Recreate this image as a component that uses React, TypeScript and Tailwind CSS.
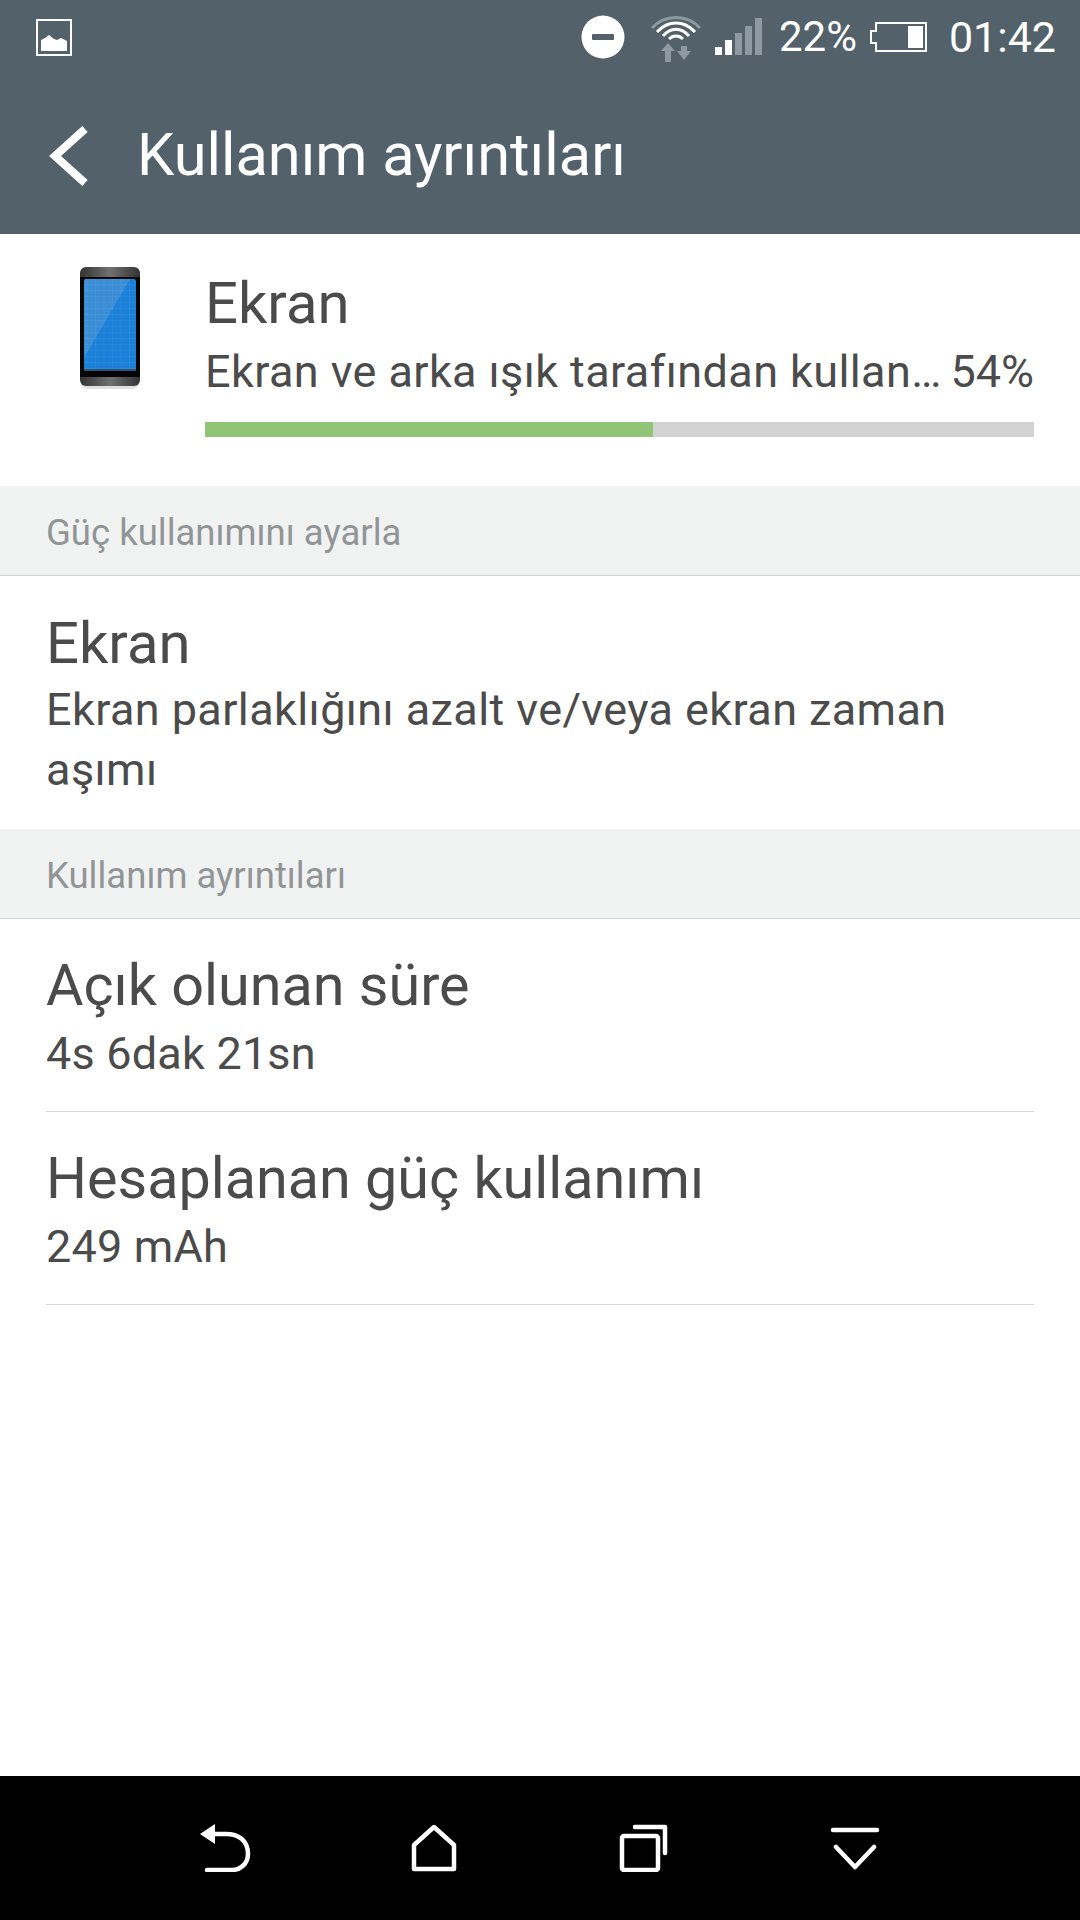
import React from 'react';

const StatusBar = () => (
  <div className="h-[74px] flex items-center pl-[36px] pr-[24px] text-white">
    <svg width="36" height="37" viewBox="0 0 36 37" className="shrink-0">
      <rect x="1" y="1" width="34" height="35" fill="none" stroke="#fff" strokeWidth="2" />
      <path d="M5 32V21l4-2 4-3 5 4 3 1 4-2 6 3v10z" fill="#fff" />
    </svg>
    <div className="ml-auto flex items-center">
      <svg width="44" height="44" viewBox="0 0 44 44" className="mr-[25px]">
        <circle cx="22" cy="22" r="21.500" fill="#fff" />
        <rect x="11" y="19" width="22" height="6" rx="1" fill="#52616a" />
      </svg>
      <svg width="52" height="50" viewBox="0 0 52 50" className="mr-[13px] mt-[2px]">
        <path d="M2 15C15 1 37 1 50 15" fill="none" stroke="#8e9aa1" strokeWidth="3" />
        <path d="M7 19C18 7 34 7 45 19" fill="none" stroke="#fff" strokeWidth="3" />
        <path d="M13 23C21 14 31 14 39 23" fill="none" stroke="#fff" strokeWidth="3" />
        <path d="M19 26C23 22 29 22 33 26" fill="none" stroke="#fff" strokeWidth="3" />
        <path d="M11 38l7-8 7 8h-4v11h-6V38zM27 38h4V33h6v5h4l-7 9z" fill="#8e9aa1" />
      </svg>
      <svg width="48" height="38" viewBox="0 0 48 38" className="mr-[16px]">
        <rect x="0" y="29" width="7" height="8" fill="#fff" />
        <rect x="10" y="22" width="7" height="15" fill="#fff" />
        <rect x="20" y="15" width="7" height="22" fill="#8e9aa1" />
        <rect x="30" y="8" width="7" height="29" fill="#8e9aa1" />
        <rect x="40" y="0" width="7" height="37" fill="#8e9aa1" />
      </svg>
      <span className="text-[42px] leading-none">22%</span>
      <svg width="58" height="32" viewBox="0 0 58 32" className="ml-[13px] mr-[21px]">
        <path d="M6 10V2H56V30H6V22H1V10z" fill="none" stroke="#fff" strokeWidth="2" />
        <rect x="38" y="5" width="15" height="22" fill="#fff" />
      </svg>
      <span className="text-[43px] leading-none">01:42</span>
    </div>
  </div>
);

const Section = ({ title }: { title: string }) => (
  <div className="h-[90px] bg-[#f1f3f3] border-b border-[#d2d4d4] flex items-center px-[46px] pt-[5px]">
    <span className="text-[36.500px] text-[#929596]">{title}</span>
  </div>
);

const Item = ({ title, sub }: { title: string; sub: string }) => (
  <div className="mx-[46px] border-b border-[#d4d6d6] h-[193px] pt-[32px]">
    <div className="text-[57.500px] leading-[70px]">{title}</div>
    <div className="text-[45px] leading-[60px] mt-[3px] tracking-[0.2px]">{sub}</div>
  </div>
);

const PhoneIcon = () => (
  <svg width="64" height="124" viewBox="0 0 64 124">
    <defs>
      <linearGradient id="bez" x1="0" x2="1" y1="0" y2="0">
        <stop offset="0" stopColor="#333" />
        <stop offset="0.5" stopColor="#707070" />
        <stop offset="1" stopColor="#333" />
      </linearGradient>
      <pattern id="cells" width="8.500" height="6" patternUnits="userSpaceOnUse">
        <path d="M0 0h8.500M0 0v6" stroke="#fff" strokeOpacity="0.1" strokeWidth="1" fill="none" />
      </pattern>
    </defs>
    <rect x="3" y="3" width="58" height="120" rx="7" fill="#000" fillOpacity="0.12" />
    <rect x="2" y="1" width="60" height="119" rx="6" fill="url(#bez)" />
    <rect x="2" y="11" width="60" height="100" fill="#060606" />
    <rect x="6" y="13" width="52" height="92" rx="2" fill="#1a80d8" />
    <path d="M6 92L52 13H8a2 2 0 0 0-2 2z" fill="#4a93d6" fillOpacity="0.7" />
    <rect x="6" y="13" width="52" height="92" rx="2" fill="url(#cells)" />
    <rect x="6" y="103" width="52" height="2" fill="#34536f" />
  </svg>
);

const App: React.FC = () => {
  return (
    <div className="w-[1080px] h-[1920px] flex flex-col bg-white font-['Roboto',sans-serif] text-[#4b4b4b]">
      <div className="h-[234px] bg-[#52616a] shrink-0">
        <StatusBar />
        <div className="flex items-center h-[160px] pl-[49px] pt-[4px]">
          <svg width="40" height="60" viewBox="0 0 40 60">
            <path d="M36 3L6 30l30 27" fill="none" stroke="#fff" strokeWidth="8" />
          </svg>
          <h1 className="ml-[48px] text-[59.500px] text-white font-normal">Kullanım ayrıntıları</h1>
        </div>
      </div>

      <div className="h-[252px] flex shrink-0">
        <div className="w-[205px] shrink-0 pl-[78px] pt-[32px]">
          <PhoneIcon />
        </div>
        <div className="flex-1 pr-[46px] pt-[34px]">
          <div className="text-[58px] leading-[70px]">Ekran</div>
          <div className="flex justify-between text-[45px] leading-[60px] mt-[4px]">
            <span className="tracking-[0.4px]">Ekran ve arka ışık tarafından kullan…</span>
            <span>54%</span>
          </div>
          <div className="h-[15px] bg-[#d2d2d2] mt-[20px]">
            <div className="h-full bg-[#90c577] w-[54%]" />
          </div>
        </div>
      </div>

      <Section title="Güç kullanımını ayarla" />
      <div className="h-[253px] px-[46px] pt-[32px] shrink-0">
        <div className="text-[58px] leading-[70px]">Ekran</div>
        <div className="text-[45px] leading-[60px] mt-[2px] tracking-[0.4px]">Ekran parlaklığını azalt ve/veya ekran zaman aşımı</div>
      </div>
      <Section title="Kullanım ayrıntıları" />
      <Item title="Açık olunan süre" sub="4s 6dak 21sn" />
      <Item title="Hesaplanan güç kullanımı" sub="249 mAh" />

      <div className="flex-1" />

      <div className="h-[144px] bg-black flex items-center shrink-0 pl-[200px] gap-[162px]">
        <svg width="52" height="48" viewBox="0 0 52 48" className="mr-[-3px]">
          <path d="M0 10L15 0v20z" fill="#fff" />
          <path d="M12 10h14c12 0 22 6 22 20 0 10-8 16-16 16H7" fill="none" stroke="#fff" strokeWidth="4.500" strokeLinecap="round" />
        </svg>
        <svg width="46" height="48" viewBox="0 0 46 48">
          <path d="M23 3L3 21v24h40V21z" fill="none" stroke="#fff" strokeWidth="4.500" strokeLinejoin="round" />
        </svg>
        <svg width="50" height="48" viewBox="0 0 50 48">
          <rect x="3" y="12" width="36" height="34" rx="2" fill="none" stroke="#fff" strokeWidth="4.500" />
          <path d="M16 3h30v26" fill="none" stroke="#fff" strokeWidth="4.500" strokeLinecap="round" strokeLinejoin="round" />
        </svg>
        <svg width="50" height="44" viewBox="0 0 50 44" className="ml-[-1px]">
          <path d="M3 4h44M6 21l19 20 19-20" fill="none" stroke="#fff" strokeWidth="4.500" strokeLinecap="round" strokeLinejoin="round" />
        </svg>
      </div>
    </div>
  );
};

export default App;
